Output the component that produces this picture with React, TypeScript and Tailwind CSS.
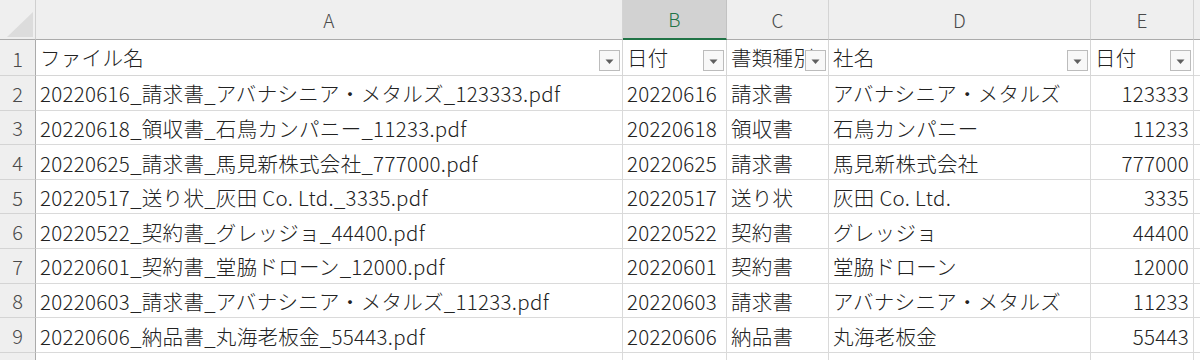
const cols = ["A", "B", "C", "D", "E"];

type Row = { file: string; date: string; kind: string; company: string; amount: string };

const rows: Row[] = [
  { file: "20220616_請求書_アバナシニア・メタルズ_123333.pdf", date: "20220616", kind: "請求書", company: "アバナシニア・メタルズ", amount: "123333" },
  { file: "20220618_領収書_石鳥カンパニー_11233.pdf", date: "20220618", kind: "領収書", company: "石鳥カンパニー", amount: "11233" },
  { file: "20220625_請求書_馬見新株式会社_777000.pdf", date: "20220625", kind: "請求書", company: "馬見新株式会社", amount: "777000" },
  { file: "20220517_送り状_灰田 Co. Ltd._3335.pdf", date: "20220517", kind: "送り状", company: "灰田 Co. Ltd.", amount: "3335" },
  { file: "20220522_契約書_グレッジョ_44400.pdf", date: "20220522", kind: "契約書", company: "グレッジョ", amount: "44400" },
  { file: "20220601_契約書_堂脇ドローン_12000.pdf", date: "20220601", kind: "契約書", company: "堂脇ドローン", amount: "12000" },
  { file: "20220603_請求書_アバナシニア・メタルズ_11233.pdf", date: "20220603", kind: "請求書", company: "アバナシニア・メタルズ", amount: "11233" },
  { file: "20220606_納品書_丸海老板金_55443.pdf", date: "20220606", kind: "納品書", company: "丸海老板金", amount: "55443" },
];

const grid = "grid grid-cols-[36px_587px_104px_102px_262px_103px_1fr]";

const FilterButton = () => (
  <span className="absolute right-[2px] top-[10px] flex h-[21px] w-[21px] items-center justify-center border border-[#bcbcbc] bg-[#f8f8f8]">
    <svg width="9" height="6" viewBox="0 0 9 6" className="mt-[2px]">
      <path d="M0.5 0.5 L8.5 0.5 L4.5 5 Z" fill="#5f5f5f" />
    </svg>
  </span>
);

const HeaderCell = ({ label }: { label: string }) => (
  <div className="relative flex items-center overflow-hidden border-r border-b border-[#d6d6d6] bg-white pl-[4px] pr-[24px] whitespace-nowrap">
    {label}
    <FilterButton />
  </div>
);

const Cell = ({ children, right }: { children: string; right?: boolean }) => (
  <div
    className={`flex items-center overflow-hidden border-r border-b border-[#dadada] bg-white pt-[2px] whitespace-nowrap ${
      right ? "justify-end pr-[4px]" : "pl-[4px]"
    }`}
  >
    {children}
  </div>
);

const RowNum = ({ n }: { n: number | string }) => (
  <div className="flex items-center justify-center border-r border-b border-r-[#ababab] border-b-[#d4d4d4] bg-[#efefef] pt-[2px] text-[20px] tracking-normal text-[#4a4a4a]">
    {n}
  </div>
);

export default function App() {
  return (
    <div
      className="h-[360px] w-[1200px] overflow-hidden bg-white text-[20.5px] font-light tracking-[0.3px] text-[#222]"
      style={{ fontFamily: '"Noto Sans CJK JP", "Noto Sans", sans-serif' }}
    >
      <div className={`${grid} h-[40px] bg-[#efefef] text-[19px] text-[#4a4a4a]`}>
        <div className="relative border-r border-b border-r-[#cfcfcf] border-b-[#ababab]">
          <svg width="28" height="26" viewBox="0 0 28 26" className="absolute left-[6px] top-[12px]">
            <path d="M27 0 L27 25 L1 25 Z" fill="#dcdcdc" />
          </svg>
        </div>
        {cols.map((c) =>
          c === "B" ? (
            <div
              key={c}
              className="flex items-center justify-center border-r border-b-2 border-r-[#c2c2c2] border-b-[#217346] bg-[#d2d2d2] pt-[1px] text-[#217346]"
            >
              {c}
            </div>
          ) : (
            <div key={c} className="flex items-center justify-center border-r border-b border-r-[#d4d4d4] border-b-[#ababab] pt-[2px]">
              {c}
            </div>
          )
        )}
        <div className="border-b border-b-[#ababab]" />
      </div>

      <div className={`${grid} h-[36px]`}>
        <RowNum n={1} />
        <HeaderCell label="ファイル名" />
        <HeaderCell label="日付" />
        <HeaderCell label="書類種別" />
        <HeaderCell label="社名" />
        <HeaderCell label="日付" />
        <div className="border-b border-[#dadada]" />
      </div>

      {rows.map((r, i) => (
        <div key={r.file} className={`${grid} h-[34.6px]`}>
          <RowNum n={i + 2} />
          <Cell>{r.file}</Cell>
          <Cell>{r.date}</Cell>
          <Cell>{r.kind}</Cell>
          <Cell>{r.company}</Cell>
          <Cell right>{r.amount}</Cell>
          <div className="border-b border-[#dadada]" />
        </div>
      ))}

      <div className={`${grid} h-[34px]`}>
        <RowNum n="" />
        <Cell>{""}</Cell>
        <Cell>{""}</Cell>
        <Cell>{""}</Cell>
        <Cell>{""}</Cell>
        <Cell>{""}</Cell>
        <div />
      </div>
    </div>
  );
}
